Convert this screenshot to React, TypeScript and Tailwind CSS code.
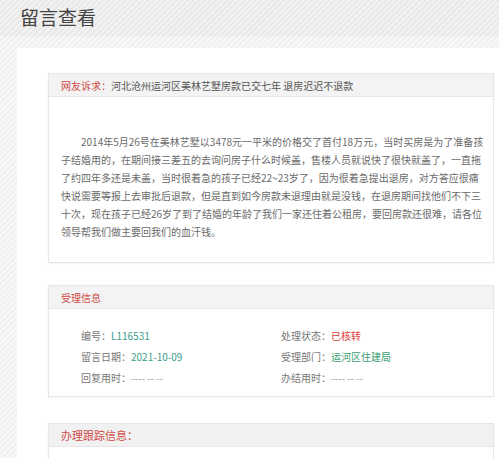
import React from "react";

const lines = [
  "2014年5月26号在美林艺墅以3478元一平米的价格交了首付18万元，当时买房是为了准备孩",
  "子结婚用的，在期间接三差五的去询问房子什么时候盖，售楼人员就说快了很快就盖了，一直拖",
  "了约四年多还是未盖，当时很着急的孩子已经22~23岁了，因为很着急提出退房，对方答应很痛",
  "快说需要等报上去审批后退款，但是直到如今房款未退理由就是没钱，在退房期间找他们不下三",
  "十次，现在孩子已经26岁了到了结婚的年龄了我们一家还住着公租房，要回房款还很难，请各位",
];

function Row({ label, value, valueClass }: { label: string; value: string; valueClass: string }) {
  return (
    <div className="h-[21px] leading-[21px] whitespace-nowrap">
      <span className="text-[#777]">{label}：</span>
      <span className={valueClass}>{value}</span>
    </div>
  );
}

export default function App() {
  return (
    <div
      className="w-[499px] h-[458px] overflow-hidden bg-[image:repeating-linear-gradient(135deg,#f1f1f1_0px,#f1f1f1_2px,#f8f8f8_2px,#f8f8f8_4px)]"
      style={{ fontFamily: '"Noto Sans CJK SC", "Noto Sans", sans-serif' }}
    >
      <div className="h-[34px] pl-[20px] flex items-center text-[19px] text-[#444] bg-[image:repeating-linear-gradient(135deg,#e9e9e9_0px,#e9e9e9_2px,#f2f2f2_2px,#f2f2f2_4px)] shadow-[0_2px_3px_rgba(0,0,0,0.04)]">
        留言查看
      </div>
      <div className="pl-[17px] pt-[14px]">
        <div className="bg-white pl-[31px] pr-[5px] pt-[25px] pb-[40px]">
          {/* card 1 */}
          <div className="border border-[#e6e6e6] shadow-[0_1px_2px_rgba(0,0,0,0.05)]">
            <div className="h-[23px] bg-[#f3f3f3] border-b border-[#e6e6e6] pl-[12px] flex items-center text-[10px] text-[#555] whitespace-nowrap">
              <span className="text-[#cf4b46]">网友诉求：</span>
              <span>河北沧州运河区美林艺墅房款已交七年 退房迟迟不退款</span>
            </div>
            <div className="pl-[12px] pr-[16px] pt-[36px] pb-[21px] text-[10px] leading-[18px] text-[#6a6a6a]">
              {lines.map((l, i) => (
                <div
                  key={i}
                  className={`text-justify [text-align-last:justify] whitespace-nowrap ${i === 0 ? "pl-[20px]" : ""}`}
                >
                  {l}
                </div>
              ))}
              <div>领导帮我们做主要回我们的血汗钱。</div>
            </div>
          </div>

          {/* card 2 */}
          <div className="mt-[22px] border border-[#e6e6e6] shadow-[0_1px_2px_rgba(0,0,0,0.05)]">
            <div className="h-[23px] bg-[#f3f3f3] border-b border-[#e6e6e6] pl-[12px] flex items-center text-[10px] text-[#cf4b46]">
              受理信息
            </div>
            <div className="pl-[32px] pt-[16px] pb-[8px] text-[10px] grid grid-cols-[200px_1fr]">
              <Row label="编号" value="L116531" valueClass="text-[#3a9e8a]" />
              <Row label="处理状态" value="已核转" valueClass="text-[#e0403a]" />
              <Row label="留言日期" value="2021-10-09" valueClass="text-[#3a9e8a]" />
              <Row label="受理部门" value="运河区住建局" valueClass="text-[#3a9e70]" />
              <Row label="回复用时" value="---- -- --" valueClass="text-[#999]" />
              <Row label="办结用时" value="---- -- --" valueClass="text-[#999]" />
            </div>
          </div>

          {/* card 3 */}
          <div className="mt-[26px] border border-[#e6e6e6] shadow-[0_1px_2px_rgba(0,0,0,0.05)]">
            <div className="h-[23px] bg-[#f1f1f1] border-b border-[#e6e6e6] pl-[12px] flex items-center text-[11px] text-[#cf4b46]">
              办理跟踪信息：
            </div>
            <div className="h-[40px]"></div>
          </div>
        </div>
      </div>
    </div>
  );
}
